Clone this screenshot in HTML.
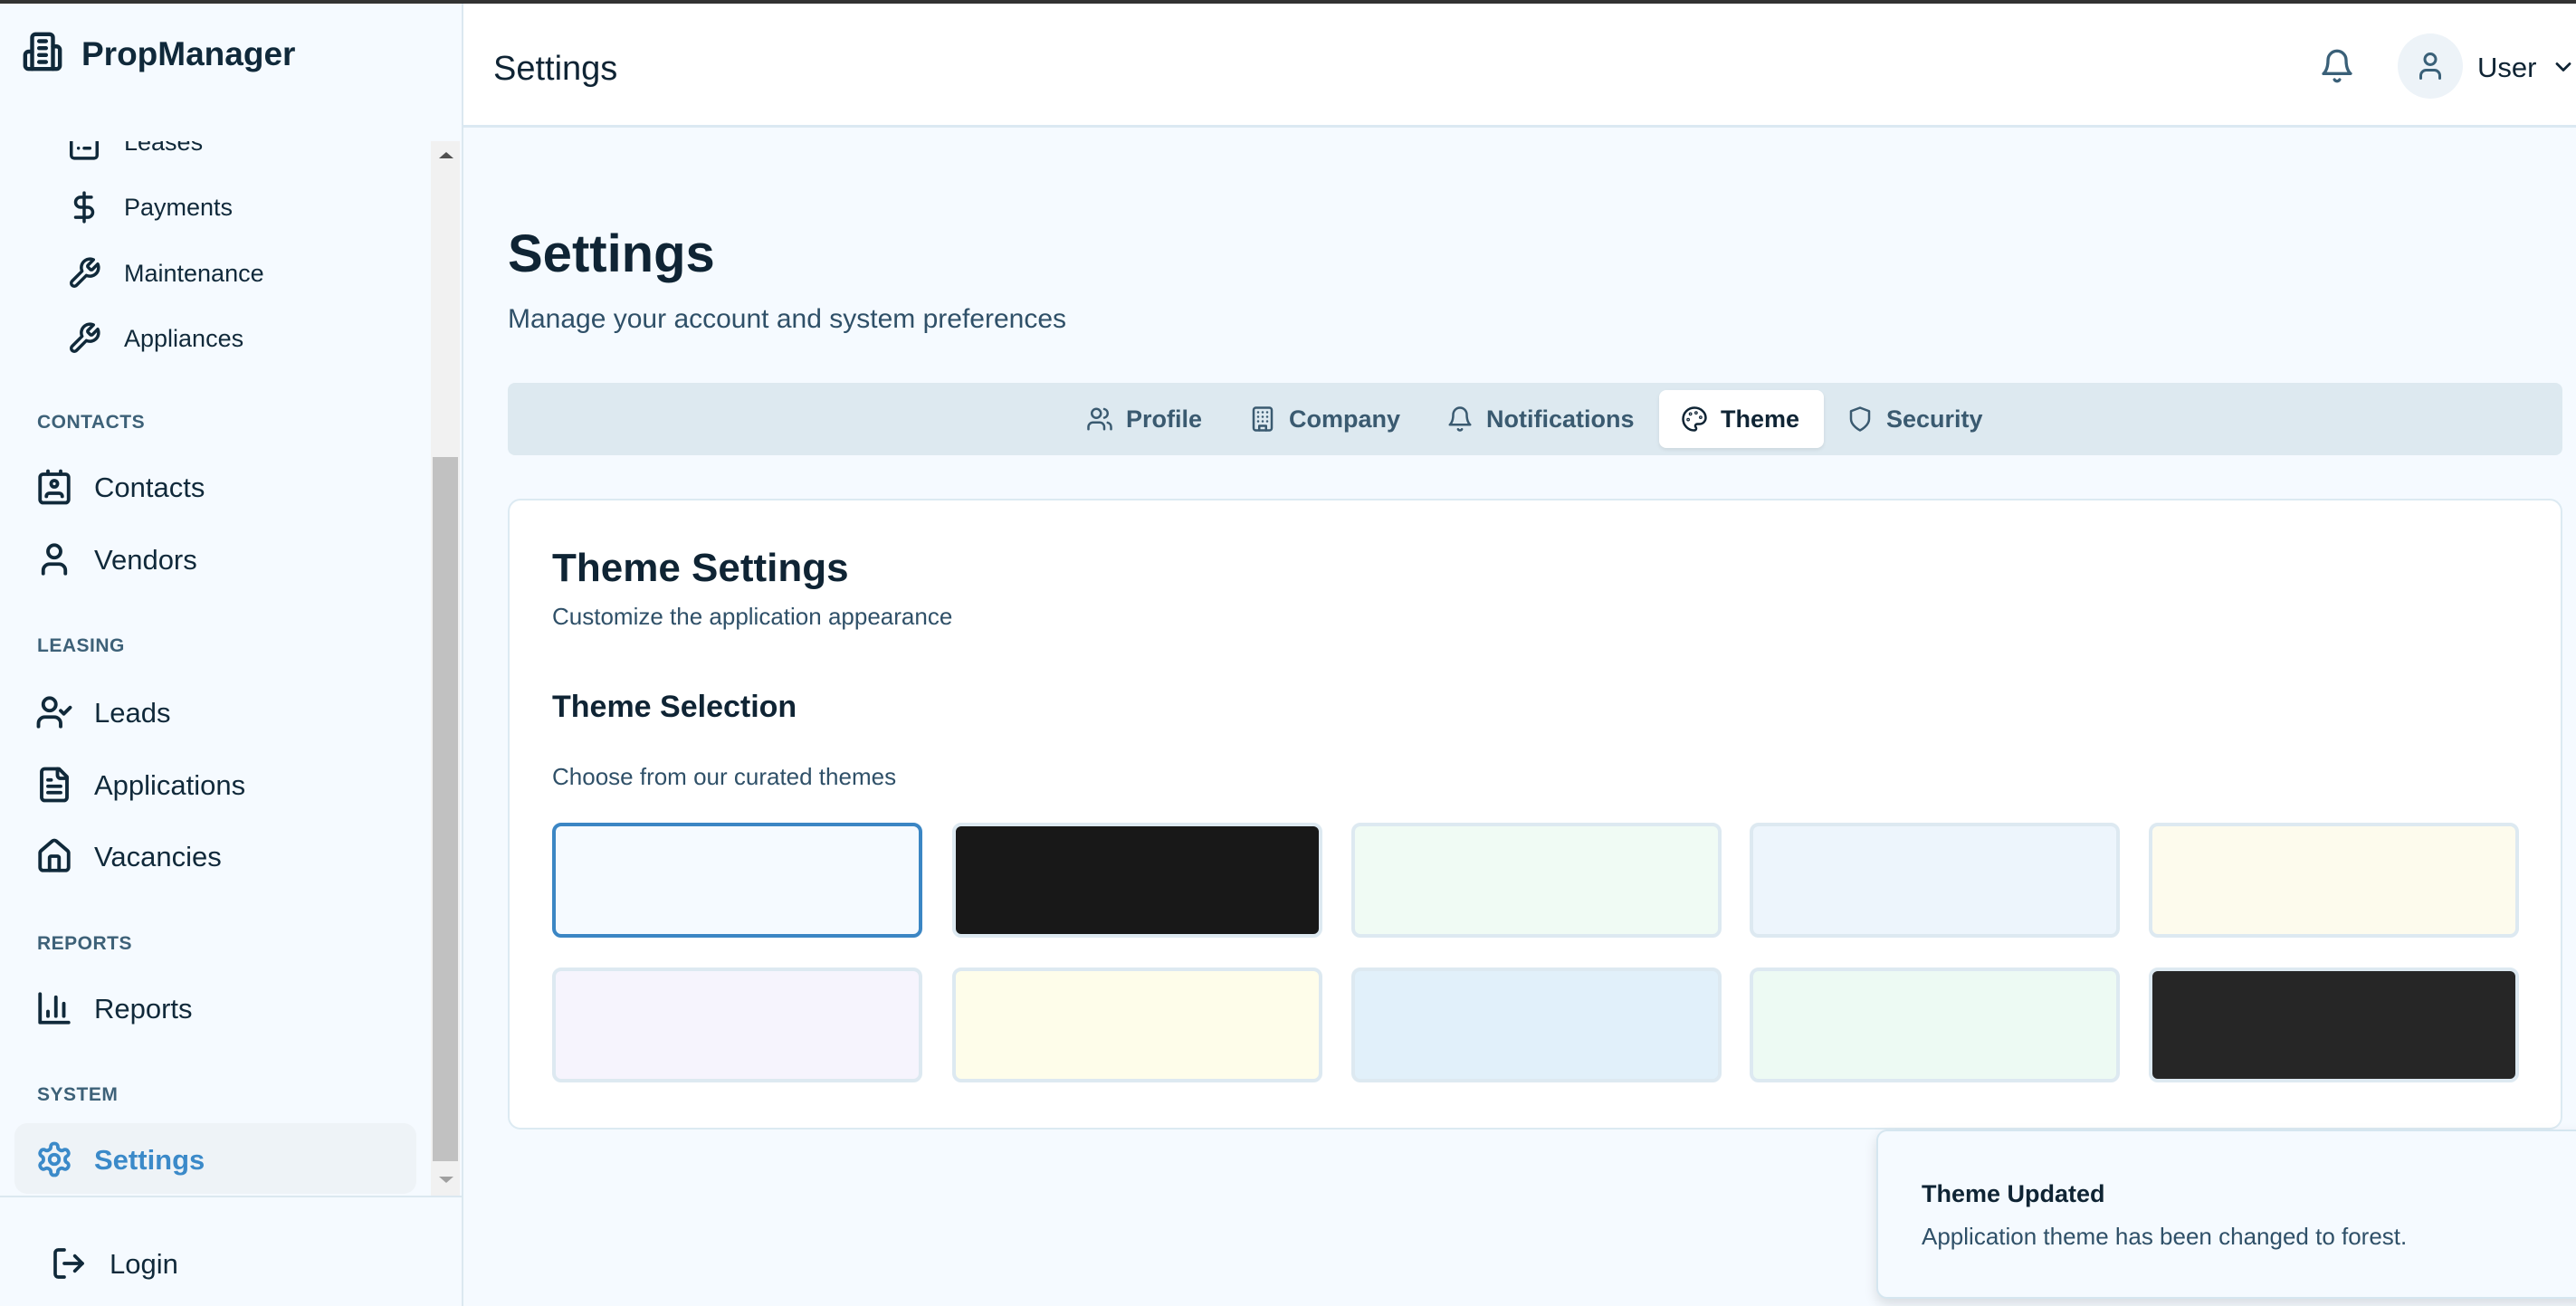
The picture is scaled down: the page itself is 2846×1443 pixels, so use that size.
<!DOCTYPE html>
<html><head><meta charset="utf-8"><style>
*{box-sizing:border-box;margin:0;padding:0}
body{width:2846px;height:1443px;overflow:hidden;background:#f5faff;font-family:"Liberation Sans",sans-serif;color:#0f2434;position:relative}
.abs{position:absolute}
svg{fill:none;stroke-linecap:round;stroke-linejoin:round}
.t{position:absolute;white-space:nowrap;line-height:1}
.sb{position:absolute;left:0;top:0;width:512px;height:1443px;background:#f5faff;border-right:2px solid #dbe8f0}
.si{position:absolute;left:74px;width:38px;height:38px;stroke:#10293a;stroke-width:2.2}
.st{position:absolute;left:137px;font-size:27px;color:#10293a;line-height:1}
.mi{position:absolute;left:39px;width:42px;height:42px;stroke:#10293a;stroke-width:2.2}
.mt{position:absolute;left:104px;font-size:31px;color:#10293a;line-height:1}
.sec{position:absolute;left:41px;font-size:21px;font-weight:bold;color:#3d6178;letter-spacing:.5px;line-height:1}
.tab{position:absolute;top:431px;height:64px;display:flex;align-items:center;font-size:27px;font-weight:bold;color:#3a5a70}
.tab svg{width:30px;height:30px;stroke:#3a5a70;stroke-width:2;margin-right:14px}
.sw{position:absolute;width:409px;height:127px;border:4px solid #dde9f1;border-radius:10px}
</style></head><body>

<!-- sidebar -->
<div class="sb">
  <svg class="abs" style="left:24px;top:34px;width:46px;height:46px;stroke:#10293a;stroke-width:2.3" viewBox="0 0 24 24"><path d="M6 22V4a2 2 0 0 1 2-2h8a2 2 0 0 1 2 2v18Z"/><path d="M6 12H4a2 2 0 0 0-2 2v6a2 2 0 0 0 2 2h2"/><path d="M18 9h2a2 2 0 0 1 2 2v9a2 2 0 0 1-2 2h-2"/><path d="M10 6h4M10 10h4M10 14h4M10 18h4"/></svg>
  <div class="t" style="left:90px;top:41px;font-size:37px;font-weight:bold;color:#10293a">PropManager</div>

  <div class="abs" style="left:0;top:156px;width:476px;height:1166px;overflow:hidden">
    <svg class="si" style="top:-16px" viewBox="0 0 24 24"><rect x="3" y="4" width="18" height="18" rx="2"/><path d="M8 15h.01M12 15h4"/></svg>
    <div class="st" style="top:-12px">Leases</div>
    <svg class="si" style="top:54px" viewBox="0 0 24 24"><path d="M12 2v20"/><path d="M17 5H9.5a3.5 3.5 0 0 0 0 7h5a3.5 3.5 0 0 1 0 7H6"/></svg>
    <div class="st" style="top:60px">Payments</div>
    <svg class="si" style="top:127px" viewBox="0 0 24 24"><path d="M14.7 6.3a1 1 0 0 0 0 1.4l1.6 1.6a1 1 0 0 0 1.4 0l3.77-3.77a6 6 0 0 1-7.94 7.94l-6.91 6.91a2.12 2.12 0 0 1-3-3l6.91-6.91a6 6 0 0 1 7.94-7.94l-3.76 3.76z"/></svg>
    <div class="st" style="top:133px">Maintenance</div>
    <svg class="si" style="top:199px" viewBox="0 0 24 24"><path d="M14.7 6.3a1 1 0 0 0 0 1.4l1.6 1.6a1 1 0 0 0 1.4 0l3.77-3.77a6 6 0 0 1-7.94 7.94l-6.91 6.91a2.12 2.12 0 0 1-3-3l6.91-6.91a6 6 0 0 1 7.94-7.94l-3.76 3.76z"/></svg>
    <div class="st" style="top:205px">Appliances</div>

    <div class="sec" style="top:300px">CONTACTS</div>
    <svg class="mi" style="top:361px" viewBox="0 0 24 24"><path d="M17 18a2 2 0 0 0-2-2H9a2 2 0 0 0-2 2"/><rect width="18" height="18" x="3" y="4" rx="2"/><circle cx="12" cy="10" r="2"/><path d="M8 2v2M16 2v2"/></svg>
    <div class="mt" style="top:367px">Contacts</div>
    <svg class="mi" style="top:441px" viewBox="0 0 24 24"><path d="M19 21v-2a4 4 0 0 0-4-4H9a4 4 0 0 0-4 4v2"/><circle cx="12" cy="7" r="4"/></svg>
    <div class="mt" style="top:447px">Vendors</div>

    <div class="sec" style="top:547px">LEASING</div>
    <svg class="mi" style="top:610px" viewBox="0 0 24 24"><path d="M16 21v-2a4 4 0 0 0-4-4H6a4 4 0 0 0-4 4v2"/><circle cx="9" cy="7" r="4"/><path d="M16 11l2 2 4-4"/></svg>
    <div class="mt" style="top:616px">Leads</div>
    <svg class="mi" style="top:690px" viewBox="0 0 24 24"><path d="M15 2H6a2 2 0 0 0-2 2v16a2 2 0 0 0 2 2h12a2 2 0 0 0 2-2V7Z"/><path d="M14 2v4a2 2 0 0 0 2 2h4"/><path d="M10 9H8M16 13H8M16 17H8"/></svg>
    <div class="mt" style="top:696px">Applications</div>
    <svg class="mi" style="top:769px" viewBox="0 0 24 24"><path d="M15 21v-8a1 1 0 0 0-1-1h-4a1 1 0 0 0-1 1v8"/><path d="M3 10a2 2 0 0 1 .7-1.5l7-6a2 2 0 0 1 2.6 0l7 6a2 2 0 0 1 .7 1.5v9a2 2 0 0 1-2 2H5a2 2 0 0 1-2-2z"/></svg>
    <div class="mt" style="top:775px">Vacancies</div>

    <div class="sec" style="top:876px">REPORTS</div>
    <svg class="mi" style="top:937px" viewBox="0 0 24 24"><path d="M3 3v18h18"/><path d="M18 17V9M13 17V5M8 17v-3"/></svg>
    <div class="mt" style="top:943px">Reports</div>

    <div class="sec" style="top:1043px">SYSTEM</div>
    <div class="abs" style="left:16px;top:1085px;width:444px;height:78px;background:#eef3f7;border-radius:14px"></div>
    <svg class="mi" style="top:1104px;stroke:#3b8ac9" viewBox="0 0 24 24"><path d="M12.22 2h-.44a2 2 0 0 0-2 2v.18a2 2 0 0 1-1 1.730l-.43.25a2 2 0 0 1-2 0l-.15-.08a2 2 0 0 0-2.73.73l-.22.38a2 2 0 0 0 .73 2.730l.15.1a2 2 0 0 1 1 1.72v.51a2 2 0 0 1-1 1.74l-.15.09a2 2 0 0 0-.73 2.73l.22.38a2 2 0 0 0 2.73.73l.15-.08a2 2 0 0 1 2 0l.43.25a2 2 0 0 1 1 1.73V20a2 2 0 0 0 2 2h.44a2 2 0 0 0 2-2v-.18a2 2 0 0 1 1-1.73l.43-.25a2 2 0 0 1 2 0l.15.08a2 2 0 0 0 2.73-.73l.22-.39a2 2 0 0 0-.73-2.73l-.15-.08a2 2 0 0 1-1-1.74v-.5a2 2 0 0 1 1-1.74l.15-.09a2 2 0 0 0 .73-2.73l-.22-.38a2 2 0 0 0-2.73-.73l-.15.08a2 2 0 0 1-2 0l-.43-.25a2 2 0 0 1-1-1.73V4a2 2 0 0 0-2-2z"/><circle cx="12" cy="12" r="3"/></svg>
    <div class="mt" style="top:1110px;color:#3b8ac9;font-weight:bold">Settings</div>
  </div>
  <!-- scrollbar -->
  <div class="abs" style="left:476px;top:156px;width:32px;height:1166px;background:#f1f1f1"></div>
  <div class="abs" style="left:478px;top:505px;width:28px;height:778px;background:#c1c1c1"></div>
  <div class="abs" style="left:485px;top:168px;width:0;height:0;border-left:8px solid transparent;border-right:8px solid transparent;border-bottom:7px solid #505050"></div>
  <div class="abs" style="left:485px;top:1300px;width:0;height:0;border-left:8px solid transparent;border-right:8px solid transparent;border-top:7px solid #a0a0a0"></div>
  <div class="abs" style="left:0;top:1321px;width:510px;height:2px;background:#dbe8f0"></div>
  <svg class="abs" style="left:56px;top:1376px;width:40px;height:40px;stroke:#10293a;stroke-width:2.2" viewBox="0 0 24 24"><path d="M9 21H5a2 2 0 0 1-2-2V5a2 2 0 0 1 2-2h4"/><path d="M16 17l5-5-5-5"/><path d="M21 12H9"/></svg>
  <div class="mt" style="left:121px;top:1381px">Login</div>
</div>

<!-- header -->
<div class="abs" style="left:512px;top:4px;width:2334px;height:137px;background:#fff;border-bottom:3px solid #dbe9f2"></div>
<div class="abs" style="left:0;top:0;width:2846px;height:4px;background:#333"></div>
<div class="t" style="left:545px;top:57px;font-size:38px;color:#0f2434">Settings</div>
<svg class="abs" style="left:2562px;top:53px;width:40px;height:40px;stroke:#3a6078;stroke-width:2" viewBox="0 0 24 24"><path d="M6 8a6 6 0 0 1 12 0c0 7 3 9 3 9H3s3-2 3-9"/><path d="M10.3 21a1.94 1.94 0 0 0 3.4 0"/></svg>
<div class="abs" style="left:2649px;top:37px;width:72px;height:72px;border-radius:50%;background:#edf3f8"></div>
<svg class="abs" style="left:2667px;top:55px;width:36px;height:36px;stroke:#3a6078;stroke-width:2" viewBox="0 0 24 24"><path d="M19 21v-2a4 4 0 0 0-4-4H9a4 4 0 0 0-4 4v2"/><circle cx="12" cy="7" r="4"/></svg>
<div class="t" style="left:2737px;top:59px;font-size:31px;color:#0f2434">User</div>
<svg class="abs" style="left:2818px;top:60px;width:28px;height:28px;stroke:#0f2434;stroke-width:2.4" viewBox="0 0 24 24"><path d="m6 9 6 6 6-6"/></svg>

<!-- page -->
<div class="t" style="left:561px;top:252px;font-size:58px;font-weight:bold;color:#0f2434">Settings</div>
<div class="t" style="left:561px;top:338px;font-size:30px;color:#2f5068">Manage your account and system preferences</div>

<div class="abs" style="left:561px;top:423px;width:2270px;height:80px;background:#dde9f0;border-radius:8px"></div>
<div class="abs" style="left:1833px;top:431px;width:182px;height:64px;background:#fff;border-radius:8px;box-shadow:0 2px 4px rgba(0,0,0,.08)"></div>
<div class="tab" style="left:1200px"><svg viewBox="0 0 24 24"><path d="M16 21v-2a4 4 0 0 0-4-4H6a4 4 0 0 0-4 4v2"/><circle cx="9" cy="7" r="4"/><path d="M22 21v-2a4 4 0 0 0-3-3.87"/><path d="M16 3.13a4 4 0 0 1 0 7.75"/></svg>Profile</div>
<div class="tab" style="left:1380px"><svg viewBox="0 0 24 24"><rect x="4" y="2" width="16" height="20" rx="2"/><path d="M9 22v-4h6v4M8 6h.01M16 6h.01M12 6h.01M12 10h.01M12 14h.01M16 10h.01M16 14h.01M8 10h.01M8 14h.01"/></svg>Company</div>
<div class="tab" style="left:1598px"><svg viewBox="0 0 24 24"><path d="M6 8a6 6 0 0 1 12 0c0 7 3 9 3 9H3s3-2 3-9"/><path d="M10.3 21a1.94 1.94 0 0 0 3.4 0"/></svg>Notifications</div>
<div class="tab" style="left:1857px;color:#0f2434"><svg viewBox="0 0 24 24" style="stroke:#0f2434"><circle cx="13.5" cy="6.5" r=".5"/><circle cx="17.5" cy="10.5" r=".5"/><circle cx="8.5" cy="7.5" r=".5"/><circle cx="6.5" cy="12.5" r=".5"/><path d="M12 2C6.5 2 2 6.5 2 12s4.5 10 10 10c.926 0 1.648-.746 1.648-1.688 0-.437-.18-.835-.437-1.125-.29-.289-.438-.652-.438-1.125a1.64 1.64 0 0 1 1.668-1.668h1.996c3.051 0 5.555-2.503 5.555-5.554C21.965 6.012 17.461 2 12 2z"/></svg>Theme</div>
<div class="tab" style="left:2040px"><svg viewBox="0 0 24 24"><path d="M12 22s8-4 8-10V5l-8-3-8 3v7c0 6 8 10 8 10z"/></svg>Security</div>

<div class="abs" style="left:561px;top:551px;width:2270px;height:697px;background:#fff;border:2px solid #dceaf2;border-radius:14px"></div>
<div class="t" style="left:610px;top:606px;font-size:44px;font-weight:bold;color:#0f2434">Theme Settings</div>
<div class="t" style="left:610px;top:668px;font-size:26px;color:#2f5068">Customize the application appearance</div>
<div class="t" style="left:610px;top:764px;font-size:34px;font-weight:bold;color:#0f2434">Theme Selection</div>
<div class="t" style="left:610px;top:845px;font-size:26px;color:#2f5068">Choose from our curated themes</div>

<div class="sw" style="left:610px;top:909px;background:#f5faff;border-color:#3b86c4"></div>
<div class="sw" style="left:1052px;top:909px;background:#181818"></div>
<div class="sw" style="left:1493px;top:909px;background:#f0fbf4"></div>
<div class="sw" style="left:1933px;top:909px;background:#edf5fc"></div>
<div class="sw" style="left:2374px;top:909px;background:#fdfbed"></div>
<div class="sw" style="left:610px;top:1069px;background:#f6f4fd"></div>
<div class="sw" style="left:1052px;top:1069px;background:#fefdea"></div>
<div class="sw" style="left:1493px;top:1069px;background:#e1f0fa"></div>
<div class="sw" style="left:1933px;top:1069px;background:#edfaf3"></div>
<div class="sw" style="left:2374px;top:1069px;background:#262626"></div>

<!-- toast -->
<div class="abs" style="left:2073px;top:1248px;width:800px;height:187px;background:#f5faff;border:2px solid #d5e6f0;border-radius:12px;box-shadow:0 6px 14px rgba(0,0,0,.12)"></div>
<div class="t" style="left:2123px;top:1306px;font-size:27px;font-weight:bold;color:#0f2434">Theme Updated</div>
<div class="t" style="left:2123px;top:1353px;font-size:26px;color:#2f5068">Application theme has been changed to forest.</div>
</body></html>
